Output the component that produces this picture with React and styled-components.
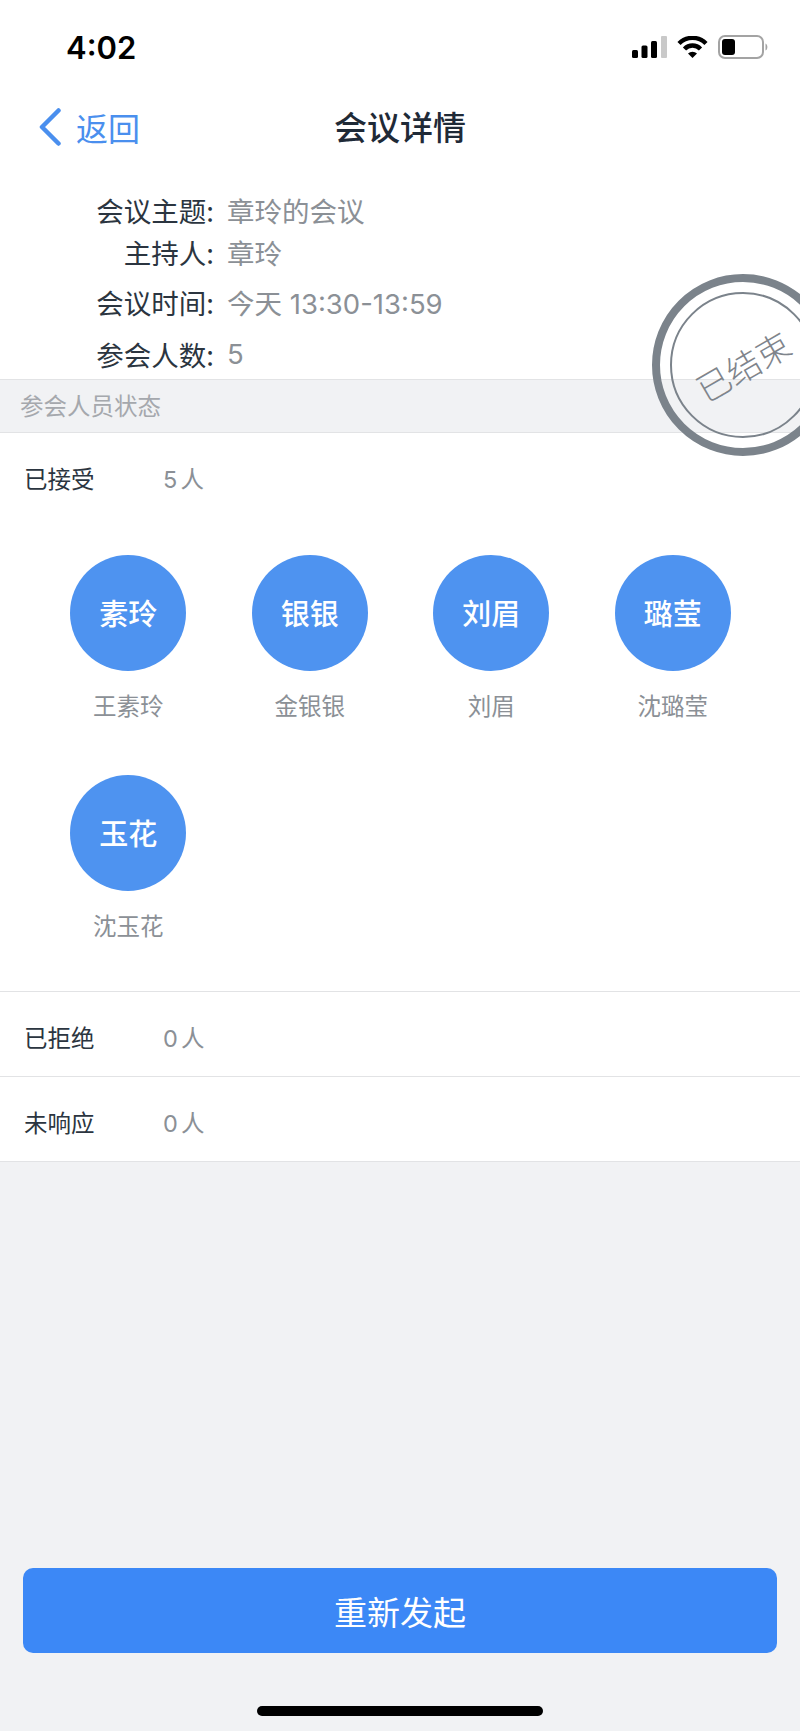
import React from "react";
import styled, { createGlobalStyle } from "styled-components";

const Global = createGlobalStyle`
  html, body { margin: 0; padding: 0; background: #fff; }
  * { box-sizing: border-box; }
`;

const CJK = `"Noto Sans CJK SC", "Noto Sans", sans-serif`;
const MIXED = `Inter, "Noto Sans CJK SC", sans-serif`;

const Page = styled.div`
  position: relative;
  width: 800px;
  height: 1731px;
  overflow: hidden;
  display: flex;
  flex-direction: column;
  background: #f1f2f4;
  font-family: ${CJK};
`;
const TopArea = styled.div`background: #fff;`;
const StatusBar = styled.div`
  height: 88px;
  display: flex;
  align-items: center;
  justify-content: space-between;
  padding: 14px 31px 8px 66px;
`;
const Time = styled.span`
  font-family: Inter, sans-serif;
  font-size: 31px;
  font-weight: 600;
  color: #000;
`;
const StatusIcons = styled.div`
  display: flex;
  align-items: center;
  gap: 10px;
`;
const Nav = styled.div`
  position: relative;
  height: 78px;
  display: flex;
  align-items: center;
  justify-content: center;
`;
const Back = styled.div`
  position: absolute;
  left: 38px;
  top: 0;
  height: 100%;
  display: flex;
  align-items: center;
  gap: 14px;
  color: #4a8fee;
  font-size: 32px;
`;
const Title = styled.h1`
  margin: 0 0 2px;
  font-size: 33px;
  font-weight: 500;
  color: #1f2a37;
`;
const Info = styled.div`padding: 23px 0 2px;`;
const InfoRow = styled.div`
  height: ${(p) => p.$h}px;
  display: flex;
  align-items: center;
  font-size: 27.5px;
`;
const InfoLabel = styled.span`
  width: 214px;
  text-align: right;
  color: #2b3540;
`;
const InfoValue = styled.span`
  margin-left: 13px;
  font-family: ${MIXED};
  color: #8b9096;
`;
const SectionBar = styled.div`
  height: 54px;
  display: flex;
  align-items: center;
  padding: 0 0 2px 20px;
  background: #f1f2f4;
  border-top: 1px solid #e2e3e5;
  border-bottom: 1px solid #e2e3e5;
  font-size: 23.5px;
  color: #a5a8ad;
`;
const Group = styled.div`background: #fff;`;
const StatRow = styled.div`
  height: ${(p) => p.$h}px;
  display: flex;
  align-items: center;
  padding: ${(p) => (p.$line ? "6px 0 0 24px" : "0 0 4px 24px")};
  font-size: 23.5px;
  color: #2b3540;
  border-bottom: ${(p) => (p.$line ? "1px solid #e2e3e5" : "none")};
`;
const StatLabel = styled.span`width: 139px;`;
const StatValue = styled.span`
  font-family: ${MIXED};
  word-spacing: -3.5px;
  color: #8b9096;
`;
const People = styled.div`
  display: grid;
  grid-template-columns: repeat(4, 181.5px);
  grid-auto-rows: 220px;
  padding: 28px 37.5px 0;
  height: 465px;
  border-bottom: 1px solid #e2e3e5;
`;
const Person = styled.div`
  display: flex;
  flex-direction: column;
  align-items: center;
`;
const Avatar = styled.div`
  width: 116px;
  height: 116px;
  padding-bottom: 3px;
  border-radius: 50%;
  background: #4e93f0;
  color: #fff;
  display: flex;
  align-items: center;
  justify-content: center;
  font-size: 29px;
  font-weight: 500;
`;
const Name = styled.div`
  margin-top: 16px;
  font-size: 23.5px;
  line-height: 36px;
  color: #8b9096;
`;
const Spacer = styled.div`flex: 1;`;
const Footer = styled.div`
  height: 163px;
  padding: 0 23px;
  display: flex;
  flex-direction: column;
  align-items: center;
`;
const Button = styled.button`
  width: 100%;
  height: 85px;
  flex: none;
  border: 0;
  border-radius: 10px;
  background: #3c88f6;
  color: #fff;
  font-family: ${CJK};
  font-size: 33px;
`;
const HomeBar = styled.div`
  width: 286px;
  height: 10px;
  margin-top: 53px;
  border-radius: 5px;
  background: #000;
`;
const Stamp = styled.div`
  position: absolute;
  left: 652px;
  top: 274px;
  width: 182px;
  height: 182px;
  border-radius: 50%;
  border: 8px solid #7b838b;
  display: flex;
  align-items: center;
  justify-content: center;
`;
const StampInner = styled.div`
  width: 146px;
  height: 146px;
  border-radius: 50%;
  border: 2.5px solid #7b838b;
  display: flex;
  align-items: center;
  justify-content: center;
`;
const StampText = styled.span`
  transform: translate(0, 1px) rotate(-30deg);
  font-size: 34px;
  line-height: 40px;
  font-weight: 300;
  white-space: nowrap;
  color: #7f858c;
`;

const SignalIcon = () => (
  <svg width="35" height="22" viewBox="0 0 35 22">
    <rect x="0" y="14" width="6" height="8" rx="1.5" fill="#000" />
    <rect x="9.5" y="9.5" width="6" height="12.5" rx="1.5" fill="#000" />
    <rect x="19" y="5" width="6" height="17" rx="1.5" fill="#000" />
    <rect x="29" y="0" width="6" height="22" rx="1" fill="#c9c9c9" />
  </svg>
);
const WifiIcon = () => (
  <svg width="31" height="22" viewBox="0 0 31 22">
    <path d="M2 7.5 A19 19 0 0 1 29 7.5" fill="none" stroke="#000" strokeWidth="4.4" />
    <path d="M7.5 13 A11 11 0 0 1 23.5 13" fill="none" stroke="#000" strokeWidth="4.4" />
    <path d="M11 17.5 A6.5 6.5 0 0 1 20 17.5 L15.5 22 Z" fill="#000" />
  </svg>
);
const BatteryIcon = () => (
  <svg width="51" height="24" viewBox="0 0 51 24">
    <rect x="1" y="1" width="44" height="22" rx="6" fill="none" stroke="#a3a3a3" strokeWidth="2" />
    <rect x="4" y="4" width="13" height="16" rx="3" fill="#000" />
    <path d="M47.5 8.5 C50 9.5 50 14.5 47.5 15.5 Z" fill="#a3a3a3" />
  </svg>
);
const Chevron = () => (
  <svg width="24" height="38" viewBox="0 0 24 38">
    <path d="M20.5 2.5 L4 19 L20.5 35.5" fill="none" stroke="#4a8fee" strokeWidth="4.5" strokeLinecap="round" strokeLinejoin="round" />
  </svg>
);

const infos = [
  ["会议主题:", "章玲的会议", 42],
  ["主持人:", "章玲", 42],
  ["会议时间:", "今天 13:30-13:59", 58],
  ["参会人数:", "5", 46],
];
const people = [
  ["素玲", "王素玲"],
  ["银银", "金银银"],
  ["刘眉", "刘眉"],
  ["璐莹", "沈璐莹"],
  ["玉花", "沈玉花"],
];

export default function App() {
  return (
    <Page>
      <Global />
      <TopArea>
        <StatusBar>
          <Time>4:02</Time>
          <StatusIcons>
            <SignalIcon />
            <WifiIcon />
            <BatteryIcon />
          </StatusIcons>
        </StatusBar>
        <Nav>
          <Back>
            <Chevron />
            返回
          </Back>
          <Title>会议详情</Title>
        </Nav>
        <Info>
          {infos.map(([label, value, h]) => (
            <InfoRow key={label} $h={h}>
              <InfoLabel>{label}</InfoLabel>
              <InfoValue>{value}</InfoValue>
            </InfoRow>
          ))}
        </Info>
      </TopArea>
      <SectionBar>参会人员状态</SectionBar>
      <Group>
        <StatRow $h={94}>
          <StatLabel>已接受</StatLabel>
          <StatValue>5 人</StatValue>
        </StatRow>
        <People>
          {people.map(([short, full]) => (
            <Person key={full}>
              <Avatar>{short}</Avatar>
              <Name>{full}</Name>
            </Person>
          ))}
        </People>
        <StatRow $h={85} $line>
          <StatLabel>已拒绝</StatLabel>
          <StatValue>0 人</StatValue>
        </StatRow>
        <StatRow $h={85} $line>
          <StatLabel>未响应</StatLabel>
          <StatValue>0 人</StatValue>
        </StatRow>
      </Group>
      <Spacer />
      <Footer>
        <Button>重新发起</Button>
        <HomeBar />
      </Footer>
      <Stamp>
        <StampInner>
          <StampText>已结束</StampText>
        </StampInner>
      </Stamp>
    </Page>
  );
}
